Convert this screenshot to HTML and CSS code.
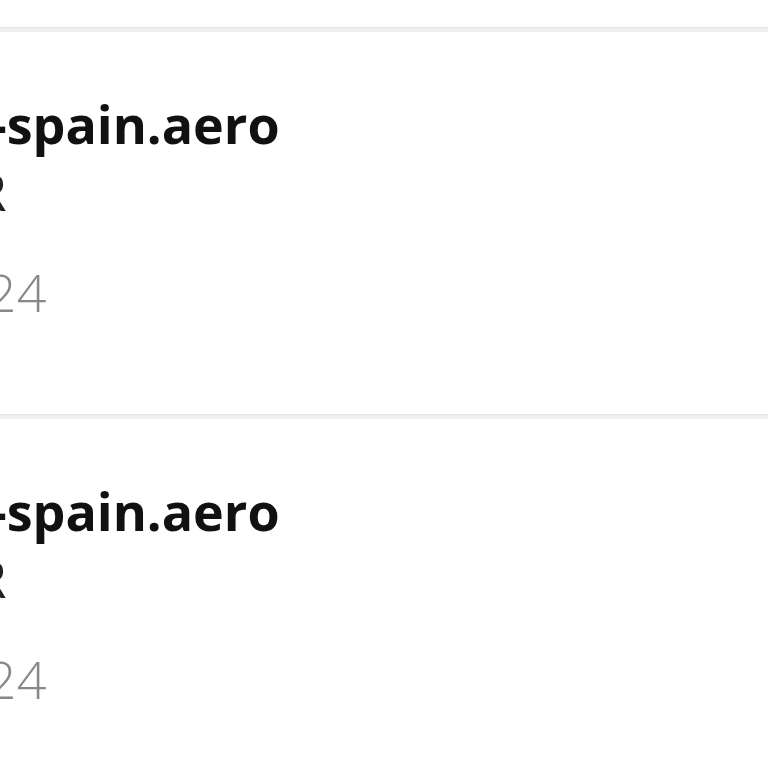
FILE: index.html
```html
<!DOCTYPE html>
<html lang="es">
<head>
  <meta charset="UTF-8" />
  <meta name="viewport" content="width=device-width, initial-scale=1.0" />
  <title>Contactos</title>
  <link rel="stylesheet" href="styles.css">
</head>
<body>
  <div class="list">
    <div class="card card-prev"></div>

    <!-- Contacto 1 -->
    <div class="card">
      <div class="info">
        <p class="email">info@air-spain.aero</p>
        <p class="name">EJECUTOR</p>
        <p class="date">12/03/2024</p>
      </div>
    </div>

    <!-- Contacto 2 -->
    <div class="card">
      <div class="info">
        <p class="email">info@air-spain.aero</p>
        <p class="name">EJECUTOR</p>
        <p class="date">12/03/2024</p>
      </div>
    </div>
  </div>
</body>
</html>
```

FILE: styles.css
```css
* { box-sizing: border-box; }
body {
  margin: 0;
  padding: 0;
  background: #f0f0f0;
  font-family: 'Open Sans', 'Noto Sans', sans-serif;
  color: #111;
  overflow: hidden;
}
.list {
  display: flex;
  flex-direction: column;
  gap: 5px;
  height: 768px;
}
.card {
  background: #fff;
  height: 382px;
  overflow: hidden;
  box-shadow: 0 1px 2px rgba(0,0,0,0.06);
}
.card-prev {
  height: 27px;
  flex-shrink: 0;
}
.card:last-child {
  flex: 1;
}
.info {
  margin-left: -230px;
  padding-top: 58px;
  white-space: nowrap;
}
.info p {
  margin: 0;
  font-size: 52px;
  line-height: 67px;
}
.email {
  font-weight: 700;
  color: #111;
}
.name {
  font-weight: 400;
  color: #222;
  letter-spacing: -1px;
}
.date {
  margin-top: 34px !important;
  font-weight: 300;
  color: #888;
  letter-spacing: 0.4px;
}
```
